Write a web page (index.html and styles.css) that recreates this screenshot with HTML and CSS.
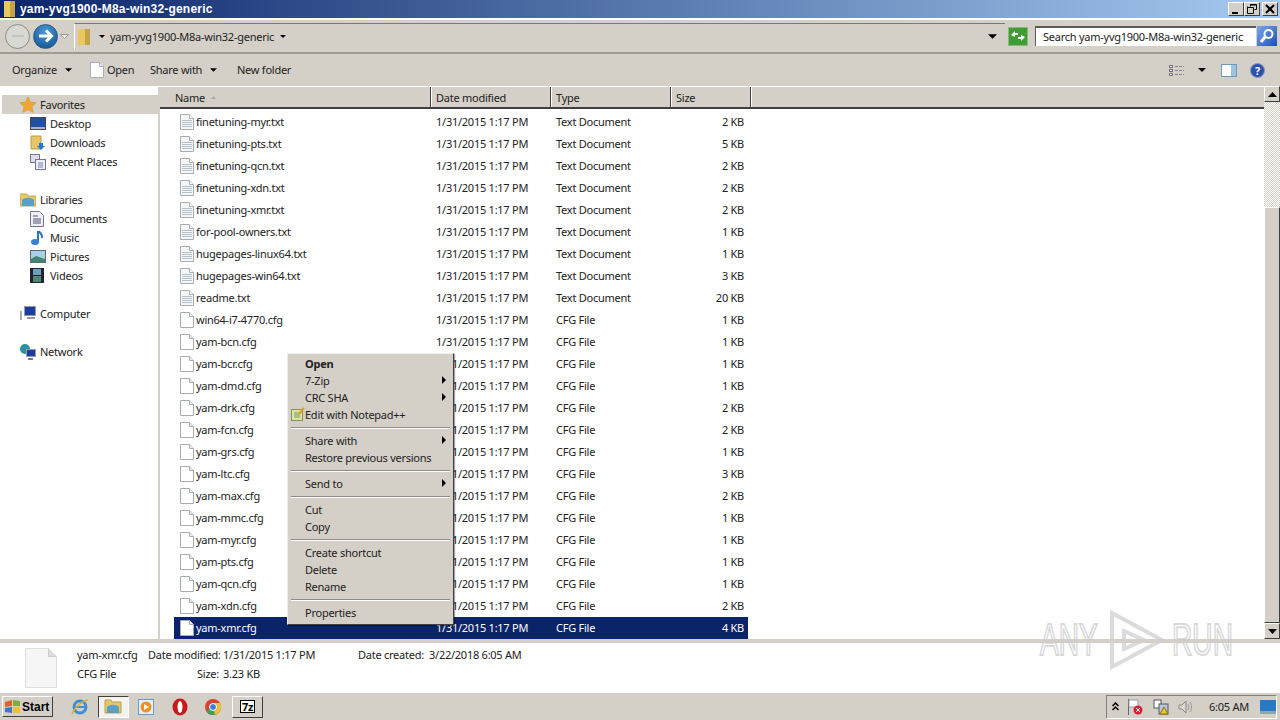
FILE: index.html
```html
<!DOCTYPE html>
<html lang="en">
<head>
    <meta charset="UTF-8">
    <title>yam-yvg1900-M8a-win32-generic</title>
    <link rel="stylesheet" href="styles.css">
</head>
<body>

<svg class="defs" width="0" height="0">
    <symbol id="txt" viewBox="0 0 14 16">
        <path d="M.5.5h9l4 4v11H.5z" fill="#f4f6f8" stroke="#a8adb3"/>
        <path d="M9.5.5v4h4" fill="#fff" stroke="#a8adb3"/>
        <path d="M2 6.5h10M2 8.5h10M2 10.5h10M2 12.5h10" stroke="#b4c0cc"/>
    </symbol>
    <symbol id="cfg" viewBox="0 0 14 16">
        <path d="M.5.5h9l4 4v11H.5z" fill="#fff" stroke="#a8adb3"/>
        <path d="M9.5.5v4h4" fill="#eee" stroke="#a8adb3"/>
    </symbol>
    <symbol id="arrow" viewBox="0 0 8 4"><path d="M0 0h8L4 4z" fill="#000"/></symbol>
</svg>

<div class="window">
    <header class="titlebar">
        <svg class="title-icon" width="13" height="16"><rect x="1" y="0" width="11" height="16" fill="#e8c860"/><rect x="7" y="0" width="5" height="16" fill="#c4a248"/></svg>
        <span class="title-text">yam-yvg1900-M8a-win32-generic</span>
        <div class="caption-buttons">
            <button class="caption-btn" type="button"><svg width="10" height="10"><path d="M1 8h6v2H1z"/></svg></button>
            <button class="caption-btn" type="button"><svg width="10" height="10"><path d="M3.5 2.5V.5h6v5h-2M.5 3.5h6v6h-6zM.5 3.5v-1M3 1h6" fill="none" stroke="#000"/></svg></button>
            <button class="caption-btn close" type="button"><svg width="10" height="10"><path d="M1 1l8 8M9 1l-8 8" stroke="#000" stroke-width="2"/></svg></button>
        </div>
    </header>

    <div class="addressbar">
        <div class="nav-buttons">
            <span class="round back"><svg width="14" height="12"><path d="M1 6h12" fill="none" stroke="#c4c4c4" stroke-width="2"/></svg></span>
            <span class="round forward"><svg width="16" height="14"><path d="M1 7h12M8 1.500l5.500 5.500L8 12.500" fill="none" stroke="#fff" stroke-width="3"/></svg></span>
            <svg class="nav-drop" width="9" height="5"><path d="M.5.500h8L4.500 4.500z" fill="#eee" stroke="#999"/></svg>
        </div>
        <div class="address-field">
            <svg class="address-folder" width="15" height="18"><rect x="1" y="1" width="12" height="16" fill="#e8c860"/><rect x="8" y="1" width="5" height="16" fill="#c4a248"/></svg>
            <svg class="crumb-arrow" width="6" height="3"><use href="#arrow"/></svg>
            <span class="crumb">yam-yvg1900-M8a-win32-generic</span>
            <svg class="crumb-arrow" width="6" height="3"><use href="#arrow"/></svg>
            <svg class="address-drop" width="9" height="5"><use href="#arrow"/></svg>
        </div>
        <span class="refresh"><svg width="16" height="12"><path d="M1 5l4-4v2h3v2H5v2zM15 7l-4 4V9H8V7h3V5z" fill="#fff"/></svg></span>
        <div class="search-box">Search yam-yvg1900-M8a-win32-generic</div>
        <span class="search-btn"><svg width="16" height="16"><circle cx="9.500" cy="6" r="4" fill="none" stroke="#fff" stroke-width="2"/><path d="M6 9l-4 5" stroke="#fff" stroke-width="3"/></svg></span>
    </div>

    <div class="toolbar">
        <span class="tool tool-organize">Organize<svg width="7" height="4"><use href="#arrow"/></svg></span>
        <span class="tool tool-open"><svg class="open-icon" width="14" height="16"><use href="#cfg"/></svg>Open</span>
        <span class="tool tool-share">Share with<svg width="7" height="4"><use href="#arrow"/></svg></span>
        <span class="tool">New folder</span>
        <div class="tool-right">
            <svg width="16" height="12"><path d="M.5 1.500h3v2h-3zM.5 5.500h3v2h-3zM.5 9.500h3v2h-3z" fill="#fff" stroke="#667"/><path d="M6 2.500h9M6 6.500h9M6 10.500h9" stroke="#889" stroke-dasharray="3 1"/></svg>
            <svg class="view-drop" width="8" height="4"><use href="#arrow"/></svg>
            <svg class="pane-icon" width="16" height="13"><rect x=".5" y=".5" width="15" height="12" fill="#fff" stroke="#6a9ac0"/><rect x="10" y="1" width="5" height="11" fill="#9cc4e0"/></svg>
            <span class="help">?</span>
        </div>
    </div>

    <main class="content">
        <nav class="sidebar">
            <ul class="tree">
                <li class="tree-root selected"><svg class="tree-icon" width="16" height="16"><path d="M8 0l2.400 5.200 5.600.6-4.200 3.800 1.200 5.600L8 12.400l-5 2.800 1.200-5.600L0 5.800l5.600-.6z" fill="#f0a830" stroke="#d8a040"/></svg>Favorites</li>
                <li><svg class="tree-icon" width="16" height="14"><rect x=".5" y=".5" width="15" height="12" fill="#2050a8" stroke="#445"/><rect x="1" y="10" width="14" height="2" fill="#a8b4c0"/></svg>Desktop</li>
                <li><svg class="tree-icon" width="16" height="16"><path d="M1 1h10v13H1z" fill="#e6c668" stroke="#b99b45"/><path d="M9 8h4v3h2l-4 4-4-4h2z" fill="#2878d0"/></svg>Downloads</li>
                <li><svg class="tree-icon" width="16" height="16"><rect x=".5" y=".5" width="9" height="8" fill="#dde" stroke="#778"/><rect x="5.500" y="5.500" width="10" height="10" fill="#eef" stroke="#778"/><path d="M8 9h5M8 11h5M8 13h5" stroke="#78a"/></svg>Recent Places</li>
            </ul>
            <ul class="tree">
                <li class="tree-root"><svg class="tree-icon" width="16" height="16"><path d="M0 2h7l1 2h8v10H0z" fill="#e6c668" stroke="#c4a850"/><path d="M2 8c3-3 9-3 12 0v6H2z" fill="#58a0c8"/></svg>Libraries</li>
                <li><svg class="tree-icon" width="14" height="16"><path d="M.5.5h9l4 4v11H.5z" fill="#eef" stroke="#778"/><path d="M3 5h5M3 8h8M3 10h8M3 12h8" stroke="#556"/></svg>Documents</li>
                <li><svg class="tree-icon" width="14" height="16"><path d="M8 1v10.500" stroke="#2c70c0" stroke-width="2"/><ellipse cx="5" cy="12" rx="4" ry="3" fill="#3880d0"/><path d="M9 1c1 3 4 3 3 7" fill="none" stroke="#2c70c0" stroke-width="2"/></svg>Music</li>
                <li><svg class="tree-icon" width="16" height="13"><rect x=".5" y=".5" width="15" height="12" fill="#a8d0e8" stroke="#667"/><path d="M1 9l5-3 9 3v3H1z" fill="#408870"/></svg>Pictures</li>
                <li><svg class="tree-icon" width="14" height="15"><rect width="14" height="15" fill="#223"/><rect x="3" y="1" width="8" height="6" fill="#68a0c0"/><rect x="3" y="8" width="8" height="6" fill="#508878"/></svg>Videos</li>
            </ul>
            <ul class="tree">
                <li class="tree-root"><svg class="tree-icon" width="16" height="15"><rect x="4.500" y=".5" width="11" height="9" fill="#1c3ca0" stroke="#99a"/><rect x="7" y="11" width="8" height="2" fill="#99a"/><rect y="5" width="2" height="9" fill="#aab"/></svg>Computer</li>
            </ul>
            <ul class="tree">
                <li class="tree-root"><svg class="tree-icon" width="16" height="16"><circle cx="5" cy="5" r="5" fill="#2c90a0"/><rect x="6.500" y="5.500" width="9" height="7" fill="#1c3ca0" stroke="#99a"/><path d="M8 15h5" stroke="#778" stroke-width="2"/></svg>Network</li>
            </ul>
        </nav>

        <section class="files">
            <div class="col-headers">
                <div class="col-head col-name">Name<svg class="sort-arrow" width="5" height="3"><path d="M2.500 0L5 3H0z" fill="#a8a8a8"/></svg></div>
                <div class="col-head col-date">Date modified</div>
                <div class="col-head col-type">Type</div>
                <div class="col-head col-size">Size</div>
            </div>
            <div class="rows">
                <div class="row"><svg class="file-icon"><use href="#txt"/></svg><span class="f-name">finetuning-myr.txt</span><span>1/31/2015 1:17 PM</span><span>Text Document</span><span class="f-size">2 KB</span></div>
                <div class="row"><svg class="file-icon"><use href="#txt"/></svg><span class="f-name">finetuning-pts.txt</span><span>1/31/2015 1:17 PM</span><span>Text Document</span><span class="f-size">5 KB</span></div>
                <div class="row"><svg class="file-icon"><use href="#txt"/></svg><span class="f-name">finetuning-qcn.txt</span><span>1/31/2015 1:17 PM</span><span>Text Document</span><span class="f-size">2 KB</span></div>
                <div class="row"><svg class="file-icon"><use href="#txt"/></svg><span class="f-name">finetuning-xdn.txt</span><span>1/31/2015 1:17 PM</span><span>Text Document</span><span class="f-size">2 KB</span></div>
                <div class="row"><svg class="file-icon"><use href="#txt"/></svg><span class="f-name">finetuning-xmr.txt</span><span>1/31/2015 1:17 PM</span><span>Text Document</span><span class="f-size">2 KB</span></div>
                <div class="row"><svg class="file-icon"><use href="#txt"/></svg><span class="f-name">for-pool-owners.txt</span><span>1/31/2015 1:17 PM</span><span>Text Document</span><span class="f-size">1 KB</span></div>
                <div class="row"><svg class="file-icon"><use href="#txt"/></svg><span class="f-name">hugepages-linux64.txt</span><span>1/31/2015 1:17 PM</span><span>Text Document</span><span class="f-size">1 KB</span></div>
                <div class="row"><svg class="file-icon"><use href="#txt"/></svg><span class="f-name">hugepages-win64.txt</span><span>1/31/2015 1:17 PM</span><span>Text Document</span><span class="f-size">3 KB</span></div>
                <div class="row"><svg class="file-icon"><use href="#txt"/></svg><span class="f-name">readme.txt</span><span>1/31/2015 1:17 PM</span><span>Text Document</span><span class="f-size">20 KB</span></div>
                <div class="row"><svg class="file-icon"><use href="#cfg"/></svg><span class="f-name">win64-i7-4770.cfg</span><span>1/31/2015 1:17 PM</span><span>CFG File</span><span class="f-size">1 KB</span></div>
                <div class="row"><svg class="file-icon"><use href="#cfg"/></svg><span class="f-name">yam-bcn.cfg</span><span>1/31/2015 1:17 PM</span><span>CFG File</span><span class="f-size">1 KB</span></div>
                <div class="row"><svg class="file-icon"><use href="#cfg"/></svg><span class="f-name">yam-bcr.cfg</span><span>1/31/2015 1:17 PM</span><span>CFG File</span><span class="f-size">1 KB</span></div>
                <div class="row"><svg class="file-icon"><use href="#cfg"/></svg><span class="f-name">yam-dmd.cfg</span><span>1/31/2015 1:17 PM</span><span>CFG File</span><span class="f-size">1 KB</span></div>
                <div class="row"><svg class="file-icon"><use href="#cfg"/></svg><span class="f-name">yam-drk.cfg</span><span>1/31/2015 1:17 PM</span><span>CFG File</span><span class="f-size">2 KB</span></div>
                <div class="row"><svg class="file-icon"><use href="#cfg"/></svg><span class="f-name">yam-fcn.cfg</span><span>1/31/2015 1:17 PM</span><span>CFG File</span><span class="f-size">2 KB</span></div>
                <div class="row"><svg class="file-icon"><use href="#cfg"/></svg><span class="f-name">yam-grs.cfg</span><span>1/31/2015 1:17 PM</span><span>CFG File</span><span class="f-size">1 KB</span></div>
                <div class="row"><svg class="file-icon"><use href="#cfg"/></svg><span class="f-name">yam-ltc.cfg</span><span>1/31/2015 1:17 PM</span><span>CFG File</span><span class="f-size">3 KB</span></div>
                <div class="row"><svg class="file-icon"><use href="#cfg"/></svg><span class="f-name">yam-max.cfg</span><span>1/31/2015 1:17 PM</span><span>CFG File</span><span class="f-size">2 KB</span></div>
                <div class="row"><svg class="file-icon"><use href="#cfg"/></svg><span class="f-name">yam-mmc.cfg</span><span>1/31/2015 1:17 PM</span><span>CFG File</span><span class="f-size">1 KB</span></div>
                <div class="row"><svg class="file-icon"><use href="#cfg"/></svg><span class="f-name">yam-myr.cfg</span><span>1/31/2015 1:17 PM</span><span>CFG File</span><span class="f-size">1 KB</span></div>
                <div class="row"><svg class="file-icon"><use href="#cfg"/></svg><span class="f-name">yam-pts.cfg</span><span>1/31/2015 1:17 PM</span><span>CFG File</span><span class="f-size">1 KB</span></div>
                <div class="row"><svg class="file-icon"><use href="#cfg"/></svg><span class="f-name">yam-qcn.cfg</span><span>1/31/2015 1:17 PM</span><span>CFG File</span><span class="f-size">1 KB</span></div>
                <div class="row"><svg class="file-icon"><use href="#cfg"/></svg><span class="f-name">yam-xdn.cfg</span><span>1/31/2015 1:17 PM</span><span>CFG File</span><span class="f-size">2 KB</span></div>
                <div class="row selected-row"><svg class="file-icon"><use href="#cfg"/></svg><span class="f-name">yam-xmr.cfg</span><span>1/31/2015 1:17 PM</span><span>CFG File</span><span class="f-size">4 KB</span></div>
            </div>
        </section>

        <div class="scrollbar">
            <span class="sb-btn"><svg width="9" height="5"><path d="M4.500 0L9 5H0z"/></svg></span>
            <span class="sb-track"></span>
            <span class="sb-thumb"></span>
            <span class="sb-btn"><svg width="9" height="5"><path d="M0 0h9L4.500 5z"/></svg></span>
        </div>
    </main>

    <footer class="details">
        <svg class="details-icon" width="32" height="40" viewBox="0 0 32 40"><path d="M.5.5h23l8 8v31H.5z" fill="#f6f6f6" stroke="#ddd"/><path d="M23.500.5v8h8" fill="#ddd" stroke="#ccc"/></svg>
        <div class="details-col details-main">
            <span class="details-name">yam-xmr.cfg</span>
            <span>CFG File</span>
        </div>
        <dl class="details-col details-meta">
            <div class="meta-row"><dt>Date modified:</dt><dd>1/31/2015 1:17 PM</dd></div>
            <div class="meta-row"><dt>Size:</dt><dd>3.23 KB</dd></div>
        </dl>
        <dl class="details-col details-created">
            <div class="meta-row"><dt>Date created:</dt><dd>3/22/2018 6:05 AM</dd></div>
        </dl>
    </footer>

    <div class="taskbar">
        <button class="start" type="button">
            <svg width="18" height="16"><path d="M1 3l7-2v6l-7 1z" fill="#e06030"/><path d="M9 1l7 1v5l-7 0z" fill="#78b040"/><path d="M1 9l7-1v6l-7-1z" fill="#3878d0"/><path d="M9 8h7v6l-7 0z" fill="#f0c030"/></svg>
            Start
        </button>
        <div class="quick">
            <span class="q-item"><svg width="18" height="18"><circle cx="9" cy="9" r="6" fill="none" stroke="#3c90d8" stroke-width="3"/><path d="M3 9h12" stroke="#3c90d8" stroke-width="2"/><path d="M1 16C3 10 11 3 17 2" fill="none" stroke="#e0b030" stroke-width="1.500"/></svg></span>
            <span class="q-item q-active"><svg width="18" height="15"><path d="M1 1h6l1 2h9v11H1z" fill="#e6c668" stroke="#b9a050"/><path d="M3 8c3-3 9-3 12 0v6H3z" fill="#58a0c8"/></svg></span>
            <span class="q-item"><svg width="16" height="16"><rect x=".5" y=".5" width="15" height="15" fill="#e8eef4" stroke="#58a0d8"/><circle cx="8" cy="8" r="5.500" fill="#f09020"/><path d="M6 5l5 3-5 3z" fill="#fff"/></svg></span>
            <span class="q-item"><svg width="16" height="18"><ellipse cx="8" cy="9" rx="7.500" ry="8.500" fill="#c81818"/><ellipse cx="8" cy="9" rx="2.500" ry="6" fill="#fff"/></svg></span>
            <span class="q-item"><svg width="16" height="16" viewBox="0 0 16 16"><circle cx="8" cy="8" r="8" fill="#d84030"/><path d="M8 8L1 12a8 8 0 0 0 9 3.700z" fill="#40a050"/><path d="M8 8l2 7.700A8 8 0 0 0 15 4H8z" fill="#f0c030"/><circle cx="8" cy="8" r="3.500" fill="#3880d8" stroke="#fff"/></svg></span>
            <span class="q-item q-button"><span class="sevenzip">7z</span></span>
        </div>
        <div class="tray">
            <svg class="tray-chevron" width="7" height="9"><path d="M.5 4l3-3 3 3M.5 8l3-3 3 3" fill="none" stroke="#000" stroke-width="1.500"/></svg>
            <svg width="16" height="16"><path d="M1.500 0v16" stroke="#667"/><path d="M2 1h9v7H2z" fill="#fff" stroke="#99a"/><circle cx="11" cy="11" r="4.500" fill="#d82030"/><path d="M9 9l4 4M13 9l-4 4" stroke="#fff"/></svg>
            <svg class="tray-power" width="16" height="16"><rect x="1" y="1" width="7" height="8" fill="#fff" stroke="#556"/><rect x="6" y="5" width="9" height="10" fill="#b8c8d8" stroke="#556"/><path d="M11 8l4 7H7z" fill="#f0c820" stroke="#887020"/></svg>
            <svg width="16" height="16"><path d="M2 6h3l4-4v12l-4-4H2z" fill="#d8d8d0" stroke="#888"/><path d="M11 5c1 2 1 4 0 6M13 3c2 3 2 7 0 10" fill="none" stroke="#999"/></svg>
            <span class="clock">6:05 AM</span>
            <svg class="show-desktop" width="16" height="14"><rect width="16" height="11" fill="#2878c8"/><rect y="11" width="16" height="3" fill="#8aa"/></svg>
        </div>
    </div>
</div>

<!-- context menu floats over the file list -->
<div class="context-menu">
    <div class="menu-item menu-default">Open</div>
    <div class="menu-item has-sub">7-Zip</div>
    <div class="menu-item has-sub">CRC SHA</div>
    <div class="menu-item"><svg class="menu-icon" width="14" height="14"><rect x=".5" y="2.500" width="11" height="11" fill="#d8e8a0" stroke="#889060"/><path d="M3 6h6M3 8h6M3 10h6" stroke="#889060"/><path d="M8 7l5-6" stroke="#e0a020" stroke-width="2"/></svg>Edit with Notepad++</div>
    <div class="menu-sep"></div>
    <div class="menu-item has-sub">Share with</div>
    <div class="menu-item">Restore previous versions</div>
    <div class="menu-sep"></div>
    <div class="menu-item has-sub">Send to</div>
    <div class="menu-sep"></div>
    <div class="menu-item">Cut</div>
    <div class="menu-item">Copy</div>
    <div class="menu-sep"></div>
    <div class="menu-item">Create shortcut</div>
    <div class="menu-item">Delete</div>
    <div class="menu-item">Rename</div>
    <div class="menu-sep"></div>
    <div class="menu-item">Properties</div>
</div>

<div class="watermark">
    <span class="wm-text">ANY</span>
    <svg width="58" height="62"><path d="M4 4l50 27-50 27zM16 22l20 9-20 9z" fill="none" stroke="#d0d0d0" stroke-width="4"/></svg>
    <span class="wm-text">RUN</span>
</div>

</body>
</html>
```

FILE: styles.css
```css
* {
    box-sizing: border-box;
}

html, body {
    margin: 0;
    height: 720px;
    overflow: hidden;
}

body {
    font-family: "Noto Sans", "Liberation Sans", sans-serif;
    font-size: 11px;
    line-height: 14px;
    letter-spacing: -.25px;
    color: #222;
    background-color: #d4d0c8;
}

.defs {
    position: absolute;
}

.window {
    display: flex;
    flex-direction: column;
    height: 720px;
}

/* Title bar */
.titlebar {
    height: 18px;
    display: flex;
    align-items: center;
    padding-left: 3px;
    background: linear-gradient(to right, #0a246a, #a6caf0);
    color: #fff;
}

.title-icon {
    margin-right: 4px;
}

.title-text {
    font-family: "Liberation Sans", sans-serif;
    font-weight: bold;
    font-size: 12px;
    letter-spacing: .2px;
}

.caption-buttons {
    margin-left: auto;
    margin-right: 2px;
    display: flex;
}

.caption-btn {
    width: 16px;
    height: 14px;
    padding: 0;
    display: flex;
    align-items: center;
    justify-content: center;
    background-color: #d4d0c8;
    border: 1px solid;
    border-color: #fff #404040 #404040 #fff;
}

.caption-btn.close {
    margin-left: 2px;
}

/* Address bar */
.addressbar {
    height: 36px;
    display: flex;
    align-items: center;
    padding: 0 3px 0 5px;
    border-top: 2px solid #fff;
    border-bottom: 2px solid #a09c94;
    background-color: #d4d0c8;
}

.nav-buttons {
    display: flex;
    align-items: center;
    width: 69px;
}

.round {
    width: 25px;
    height: 25px;
    border-radius: 50%;
    display: flex;
    align-items: center;
    justify-content: center;
}

.back {
    background-color: #d8d8d4;
    border: 1px solid #8a8a86;
}

.forward {
    margin-left: 3px;
    background: radial-gradient(circle at 50% 30%, #4c9ad8, #0c4c8c);
    border: 1px solid #2a5c88;
}

.nav-drop {
    margin-left: 2px;
}

.address-field {
    width: 931px;
    height: 27px;
    display: flex;
    align-items: center;
    padding-left: 2px;
    border-top: 1px solid #7a7a74;
    border-left: 1px solid #fff;
}

.address-folder {
    margin-right: 7px;
}

.crumb-arrow {
    flex-shrink: 0;
}

.crumb {
    margin: 0 6px 0 5px;
}

.address-drop {
    margin-left: auto;
    margin-right: 8px;
}

.refresh {
    width: 20px;
    height: 19px;
    margin-left: 3px;
    display: flex;
    align-items: center;
    justify-content: center;
    background-color: #3f9c35;
    border: 1px solid #8ab880;
}

.search-box {
    width: 221px;
    height: 20px;
    margin-left: 7px;
    padding: 2px 0 0 7px;
    background-color: #fff;
    border-top: 2px solid #5a5a5a;
    border-left: 1px solid #5a5a5a;
    white-space: nowrap;
}

.search-btn {
    width: 20px;
    height: 20px;
    margin-left: 1px;
    display: flex;
    align-items: center;
    justify-content: center;
    background: linear-gradient(135deg, #7aa8e8, #1c50b8);
}

/* Command bar */
.toolbar {
    height: 32px;
    display: flex;
    align-items: center;
    padding-left: 12px;
    background-color: #d4d0c8;
}

.tool {
    display: flex;
    align-items: center;
}

.tool-organize {
    width: 78px;
    gap: 8px;
}

.tool-open {
    width: 60px;
}

.tool-share {
    width: 87px;
    gap: 8px;
}

.open-icon {
    margin-right: 3px;
}

.tool-right {
    margin-left: auto;
    margin-right: 15px;
    display: flex;
    align-items: center;
}

.view-drop {
    margin-left: 13px;
}

.pane-icon {
    margin-left: 15px;
}

.help {
    width: 15px;
    height: 15px;
    margin-left: 13px;
    border-radius: 50%;
    background-color: #2c50b0;
    border: 1px solid #8a96b8;
    color: #fff;
    font-weight: bold;
    font-size: 11px;
    line-height: 13px;
    text-align: center;
}

/* Main area */
.content {
    height: 553px;
    display: flex;
    background-color: #fff;
    border-top: 1px solid #fff;
}

.sidebar {
    width: 158px;
    padding-top: 8px;
    flex-shrink: 0;
}

.tree {
    list-style: none;
    margin: 0 0 19px;
    padding: 0;
}

.tree li {
    height: 19px;
    display: flex;
    align-items: center;
    padding-left: 30px;
}

.tree .tree-icon {
    width: 16px;
    margin-right: 4px;
}

.tree .tree-root {
    padding-left: 20px;
}

.selected {
    margin-left: 2px;
    padding-left: 18px !important;
    background-color: #d4d0c8;
}

/* File list */
.files {
    flex: 1;
    border-left: 2px solid #d4d0c8;
}

.col-headers {
    height: 22px;
    display: flex;
    background-color: #d4d0c8;
    border-bottom: 2px solid #404040;
}

.col-head {
    padding: 4px 0 0 5px;
    border-right: 1px solid #404040;
    box-shadow: 1px 0 0 #fff;
}

.col-name {
    width: 271px;
    padding-left: 15px;
}

.sort-arrow {
    margin-left: 6px;
    vertical-align: 3px;
}

.col-date,
.col-type {
    width: 120px;
}

.col-size {
    width: 80px;
}

.rows {
    padding: 2px 0 0 14px;
}

.row {
    width: 574px;
    height: 22px;
    display: grid;
    grid-template-columns: 22px 240px 120px 95px 97px;
    align-items: center;
}

.file-icon {
    width: 14px;
    height: 16px;
    margin-left: 6px;
}

.f-size {
    text-align: right;
    padding-right: 4px;
}

.selected-row {
    background-color: #0a246a;
    color: #fff;
}

.scrollbar {
    width: 16px;
    margin-top: -1px;
    display: flex;
    flex-direction: column;
}

.sb-btn {
    height: 16px;
    display: flex;
    align-items: center;
    justify-content: center;
    background-color: #d4d0c8;
    border: 1px solid;
    border-color: #fff #404040 #404040 #fff;
}

.sb-track {
    height: 105px;
    background-color: #eee;
    background-image: repeating-conic-gradient(#d4d0c8 0 25%, #fff 0 50%);
    background-size: 2px 2px;
}

.sb-thumb {
    flex: 1;
    background-color: #d4d0c8;
    border: 1px solid;
    border-color: #fff #404040 #404040 #fff;
}

/* Details pane */
.details {
    height: 53px;
    display: flex;
    padding-top: 5px;
    background-color: #fff;
    border-top: 4px solid #d4d0c8;
}

.details-icon {
    margin-left: 25px;
    margin-right: 20px;
}

.details-col {
    margin: 0;
    display: flex;
    flex-direction: column;
    gap: 5px;
}

.details-main {
    width: 71px;
}

.details-meta {
    width: 210px;
}

.meta-row {
    display: flex;
    height: 14px;
    white-space: nowrap;
}

.meta-row dt {
    width: 75px;
    text-align: right;
    padding-right: 4px;
}

.details-created .meta-row dt {
    width: 71px;
    text-align: left;
    padding-right: 0;
}

.meta-row dd {
    margin: 0;
}

/* Taskbar */
.taskbar {
    flex: 1;
    display: flex;
    align-items: center;
    padding: 0 3px 0 2px;
    background-color: #d4d0c8;
    border-top: 1px solid #fff;
}

.start {
    width: 51px;
    height: 21px;
    padding: 0 0 0 1px;
    display: flex;
    align-items: center;
    font-family: "Liberation Sans", sans-serif;
    font-size: 12px;
    font-weight: bold;
    background-color: #d4d0c8;
    border: 1px solid;
    border-color: #fff #404040 #404040 #fff;
}

.quick {
    display: flex;
    align-items: center;
    margin-left: 10px;
}

.q-item {
    width: 33.500px;
    height: 22px;
    display: flex;
    align-items: center;
    justify-content: center;
}

.q-active {
    width: 31px;
    margin: 0 1px;
    background-color: #f4f2ee;
    border: 1px solid;
    border-color: #404040 #fff #fff #404040;
}

.q-button {
    width: 31px;
    margin-left: 2px;
    border: 1px solid;
    border-color: #fff #404040 #404040 #fff;
}

.sevenzip {
    width: 15px;
    height: 13px;
    border: 1px solid #000;
    background-color: #fff;
    color: #000;
    font-weight: bold;
    line-height: 11px;
    text-align: center;
}

.tray {
    width: 171px;
    height: 24px;
    margin-left: auto;
    display: flex;
    align-items: center;
    gap: 8px;
    padding-left: 5px;
    border: 1px solid;
    border-color: #808080 #fff #fff #808080;
}

.tray-power {
    margin-left: 2px;
}

.clock {
    margin-left: 8px;
}

.show-desktop {
    margin-left: auto;
}

/* Context menu */
.context-menu {
    position: absolute;
    left: 287px;
    top: 353px;
    width: 167px;
    padding: 1px 2px 3px;
    background-color: #d4d0c8;
    border: 1px solid;
    border-color: #f0eee8 #404040 #404040 #f0eee8;
    box-shadow: 1px 1px 1px rgba(0, 0, 0, .35);
}

.menu-item {
    position: relative;
    height: 17px;
    padding-left: 15px;
    line-height: 17px;
}

.menu-default {
    font-weight: bold;
}

.has-sub::after {
    content: "";
    position: absolute;
    right: 5px;
    top: 4px;
    border-left: 4px solid #000;
    border-top: 4px solid transparent;
    border-bottom: 4px solid transparent;
}

.menu-icon {
    position: absolute;
    left: 1px;
    top: 1px;
}

.menu-sep {
    height: 2px;
    margin: 3.500px 1px;
    background-color: #908c84;
    border-bottom: 1px solid #fff;
}

/* Watermark */
.watermark {
    position: absolute;
    left: 1040px;
    top: 609px;
    display: flex;
    align-items: center;
    gap: 6px;
    opacity: .75;
    pointer-events: none;
}

.wm-text {
    font-family: "Liberation Sans", sans-serif;
    font-size: 44px;
    line-height: 60px;
    letter-spacing: 0;
    width: 62px;
    display: block;
    color: transparent;
    -webkit-text-stroke: 2px #ccc;
    transform: scaleX(.64);
    transform-origin: left center;
    white-space: nowrap;
}
```
